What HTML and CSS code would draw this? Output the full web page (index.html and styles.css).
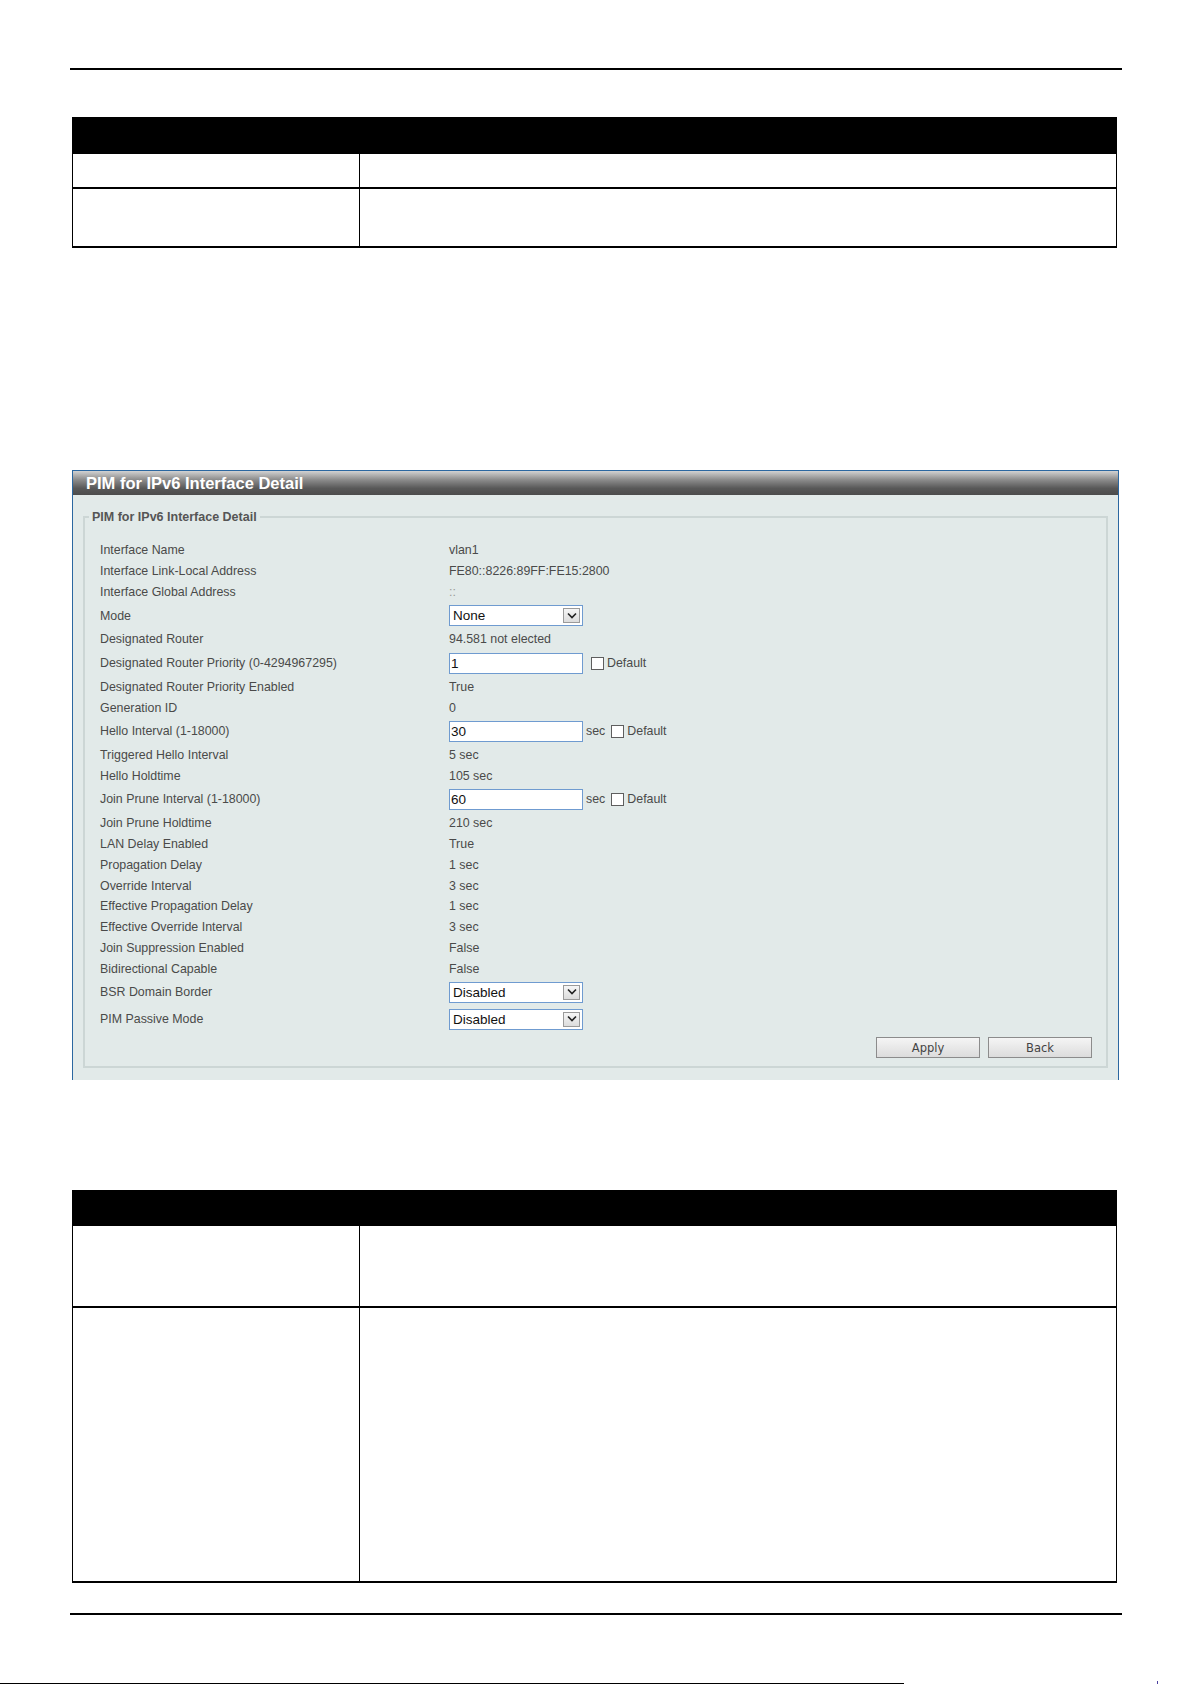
FILE: index.html
```html
<!DOCTYPE html>
<html lang="en">
<head>
    <meta charset="UTF-8">
    <title>PIM for IPv6 Interface Detail</title>
    <link rel="stylesheet" href="styles.css">
</head>
<body>

<div class="page">
    <div class="rule rule-top"></div>

    <div class="doc-table">
        <div class="doc-head"></div>
        <div class="doc-row" style="height: 35px"><div class="doc-cell"></div><div class="doc-cell"></div></div>
        <div class="doc-row" style="height: 59px"><div class="doc-cell"></div><div class="doc-cell"></div></div>
    </div>

    <div class="panel">
        <div class="panel-title">PIM for IPv6 Interface Detail</div>
        <div class="panel-body">
            <fieldset class="group">
                <legend>PIM for IPv6 Interface Detail</legend>

                <div class="row"><span class="label">Interface Name</span><span class="value">vlan1</span></div>
                <div class="row"><span class="label">Interface Link-Local Address</span><span class="value">FE80::8226:89FF:FE15:2800</span></div>
                <div class="row"><span class="label">Interface Global Address</span><span class="value faint">::</span></div>
                <div class="row row-input">
                    <span class="label">Mode</span>
                    <span class="value">
                        <span class="select"><span class="select-text">None</span><span class="select-arrow"><svg width="12" height="8" viewBox="0 0 12 8"><path d="M2 1.5 L6 5.5 L10 1.5" fill="none" stroke="#222" stroke-width="1.6"/></svg></span></span>
                    </span>
                </div>
                <div class="row"><span class="label">Designated Router</span><span class="value">94.581 not elected</span></div>
                <div class="row row-input">
                    <span class="label">Designated Router Priority (0-4294967295)</span>
                    <span class="value">
                        <span class="text-input">1</span>
                        <span class="check check-near"></span><span class="check-label">Default</span>
                    </span>
                </div>
                <div class="row"><span class="label">Designated Router Priority Enabled</span><span class="value">True</span></div>
                <div class="row"><span class="label">Generation ID</span><span class="value">0</span></div>
                <div class="row row-input">
                    <span class="label">Hello Interval (1-18000)</span>
                    <span class="value">
                        <span class="text-input">30</span>
                        <span class="unit">sec</span><span class="check"></span><span class="check-label">Default</span>
                    </span>
                </div>
                <div class="row"><span class="label">Triggered Hello Interval</span><span class="value">5 sec</span></div>
                <div class="row"><span class="label">Hello Holdtime</span><span class="value">105 sec</span></div>
                <div class="row row-input">
                    <span class="label">Join Prune Interval (1-18000)</span>
                    <span class="value">
                        <span class="text-input">60</span>
                        <span class="unit">sec</span><span class="check"></span><span class="check-label">Default</span>
                    </span>
                </div>
                <div class="row"><span class="label">Join Prune Holdtime</span><span class="value">210 sec</span></div>
                <div class="row"><span class="label">LAN Delay Enabled</span><span class="value">True</span></div>
                <div class="row"><span class="label">Propagation Delay</span><span class="value">1 sec</span></div>
                <div class="row"><span class="label">Override Interval</span><span class="value">3 sec</span></div>
                <div class="row"><span class="label">Effective Propagation Delay</span><span class="value">1 sec</span></div>
                <div class="row"><span class="label">Effective Override Interval</span><span class="value">3 sec</span></div>
                <div class="row"><span class="label">Join Suppression Enabled</span><span class="value">False</span></div>
                <div class="row"><span class="label">Bidirectional Capable</span><span class="value">False</span></div>
                <div class="row row-input">
                    <span class="label">BSR Domain Border</span>
                    <span class="value">
                        <span class="select"><span class="select-text">Disabled</span><span class="select-arrow"><svg width="12" height="8" viewBox="0 0 12 8"><path d="M2 1.5 L6 5.5 L10 1.5" fill="none" stroke="#222" stroke-width="1.6"/></svg></span></span>
                    </span>
                </div>
                <div class="row row-input">
                    <span class="label">PIM Passive Mode</span>
                    <span class="value">
                        <span class="select"><span class="select-text">Disabled</span><span class="select-arrow"><svg width="12" height="8" viewBox="0 0 12 8"><path d="M2 1.5 L6 5.5 L10 1.5" fill="none" stroke="#222" stroke-width="1.6"/></svg></span></span>
                    </span>
                </div>

                <div class="actions">
                    <button type="button" class="btn">Apply</button>
                    <button type="button" class="btn">Back</button>
                </div>
            </fieldset>
        </div>
    </div>

    <div class="doc-table doc-table-low">
        <div class="doc-head" style="height: 36px"></div>
        <div class="doc-row" style="height: 82px"><div class="doc-cell"></div><div class="doc-cell"></div></div>
        <div class="doc-row" style="height: 275px"><div class="doc-cell"></div><div class="doc-cell"></div></div>
    </div>

    <div class="rule rule-bottom"></div>
</div>

<div class="footer">
    <span class="footer-line"></span>
    <span class="footer-mark"></span>
</div>

</body>
</html>
```

FILE: styles.css
```css
body {
    font-family: "Liberation Sans", Arial, sans-serif;
    background-color: #fff;
    margin: 0;
    padding: 0;
}

.page {
    padding-left: 70px;
    width: 1052px;
}

.rule {
    height: 2px;
    background-color: #000;
}

.rule-top {
    margin-top: 68px;
}

.rule-bottom {
    margin-top: 30px;
}

/* empty document tables with a black heading bar */
.doc-table {
    margin: 47px 0 0 2px;
    width: 1045px;
    border-left: 1px solid #000;
    border-right: 1px solid #000;
    box-sizing: border-box;
}

.doc-table-low {
    margin-top: 110px;
}

.doc-head {
    height: 37px;
    background-color: #000;
}

.doc-row {
    display: grid;
    grid-template-columns: 287px 1fr;
    border-bottom: 2px solid #000;
    box-sizing: border-box;
}

.doc-cell:first-child {
    border-right: 1px solid #000;
}

/* settings panel */
.panel {
    margin: 222px 0 0 2px;
    width: 1047px;
    border: 1px solid #2b67a0;
    border-bottom: none;
    background-color: #e2eae9;
    box-sizing: border-box;
}

.panel-title {
    height: 24px;
    line-height: 24px;
    padding-left: 13px;
    color: #fff;
    font-weight: bold;
    font-size: 16.5px;
    background: linear-gradient(#d2d2d2, #8e8e8e 35%, #585858 72%, #4c4c4c);
}

.panel-body {
    padding: 15px 10px 12px 10px;
}

.group {
    margin: 0;
    padding: 16px 14px 8px 15px;
    border: 2px solid #ccd6d5;
    min-width: 0;
}

.group legend {
    margin-left: -11px;
    padding: 0 3px;
    font-size: 12.5px;
    line-height: 14px;
    font-weight: bold;
    color: #555;
}

.row {
    display: flex;
    align-items: center;
    height: 20.8px;
    font-size: 12.4px;
    color: #4a4a4a;
}

.row-input {
    height: 26.6px;
}

.label {
    width: 349px;
    flex-shrink: 0;
}

.value {
    display: flex;
    align-items: center;
}

.faint {
    color: #9a9a9a;
}

.text-input,
.select {
    display: flex;
    align-items: center;
    width: 134px;
    height: 21px;
    box-sizing: border-box;
    border: 1px solid #6f9bd0;
    background-color: #fff;
    font-size: 13.5px;
    color: #111;
}

.text-input {
    padding-left: 1px;
}

.select {
    justify-content: space-between;
    padding: 1px 2px 1px 3px;
}

.select-arrow {
    display: flex;
    align-items: center;
    justify-content: center;
    width: 17px;
    height: 15px;
    box-sizing: border-box;
    border: 1px solid #9a9a9a;
    background: linear-gradient(#f6f6f6, #dcdcdc);
}

.unit {
    margin-left: 3px;
}

.check {
    display: inline-block;
    width: 13px;
    height: 13px;
    box-sizing: border-box;
    border: 1px solid #5e5e5e;
    background-color: #fff;
    margin-left: 6px;
}

.check-near {
    margin-left: 8px;
}

.check-label {
    margin-left: 3px;
}

.actions {
    display: flex;
    justify-content: flex-end;
    gap: 8px;
    margin-top: 5px;
}

.btn {
    width: 104px;
    height: 21px;
    padding: 0;
    font-family: "DejaVu Sans", sans-serif;
    font-size: 11.5px;
    color: #444;
    border: 1px solid #8c8c8c;
    background: linear-gradient(#f5f5f5, #dcdcdc);
}

.footer {
    display: flex;
    align-items: flex-end;
    margin-top: 68px;
    height: 1px;
}

.footer-line {
    width: 904px;
    height: 1px;
    background-color: #000;
}

.footer-mark {
    width: 1px;
    height: 3px;
    margin-left: 253px;
    background-color: #4b3fa0;
}
```
